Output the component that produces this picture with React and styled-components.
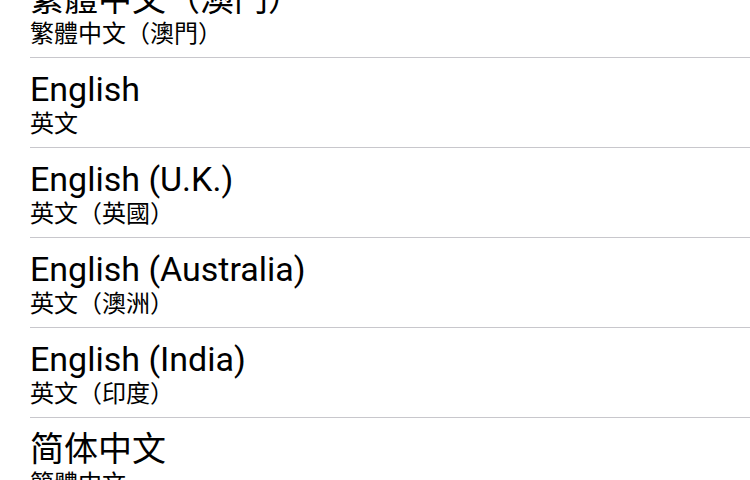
import React from 'react'
import styled, { createGlobalStyle } from 'styled-components'

const GlobalStyle = createGlobalStyle`
  html, body {
    margin: 0;
    padding: 0;
    background: #ffffff;
    overflow: hidden;
  }
  body {
    font-family: Roboto, "Noto Sans CJK TC", "Noto Sans", sans-serif;
    -webkit-font-smoothing: antialiased;
  }
`;

const Screen = styled.div`
  width: 750px;
  height: 480px;
  overflow: hidden;
  background: #ffffff;
`;

const List = styled.ul`
  list-style: none;
  margin: -32px 0 0 0;
  padding: 0 0 0 30px;
`;

const Row = styled.li`
  height: 90px;
  box-sizing: border-box;
  border-bottom: 1px solid #c8c7cc;
  display: flex;
  flex-direction: column;
  justify-content: center;
  padding-top: 3px;
`;

const Title = styled.div`
  font-size: 34px;
  line-height: 40px;
  color: #000000;
  white-space: nowrap;
`;

const Subtitle = styled.div`
  font-size: 24px;
  line-height: 30px;
  color: #000000;
  white-space: nowrap;
`;

const languages = [
  { name: '繁體中文（澳門）', local: '繁體中文（澳門）' },
  { name: 'English', local: '英文' },
  { name: 'English (U.K.)', local: '英文（英國）' },
  { name: 'English (Australia)', local: '英文（澳洲）' },
  { name: 'English (India)', local: '英文（印度）' },
  { name: '简体中文', local: '簡體中文' },
]

export default function App() {
  return (
    <Screen>
      <GlobalStyle />
      <List>
        {languages.map((lang) => (
          <Row key={lang.name}>
            <Title>{lang.name}</Title>
            <Subtitle>{lang.local}</Subtitle>
          </Row>
        ))}
      </List>
    </Screen>
  )
}
